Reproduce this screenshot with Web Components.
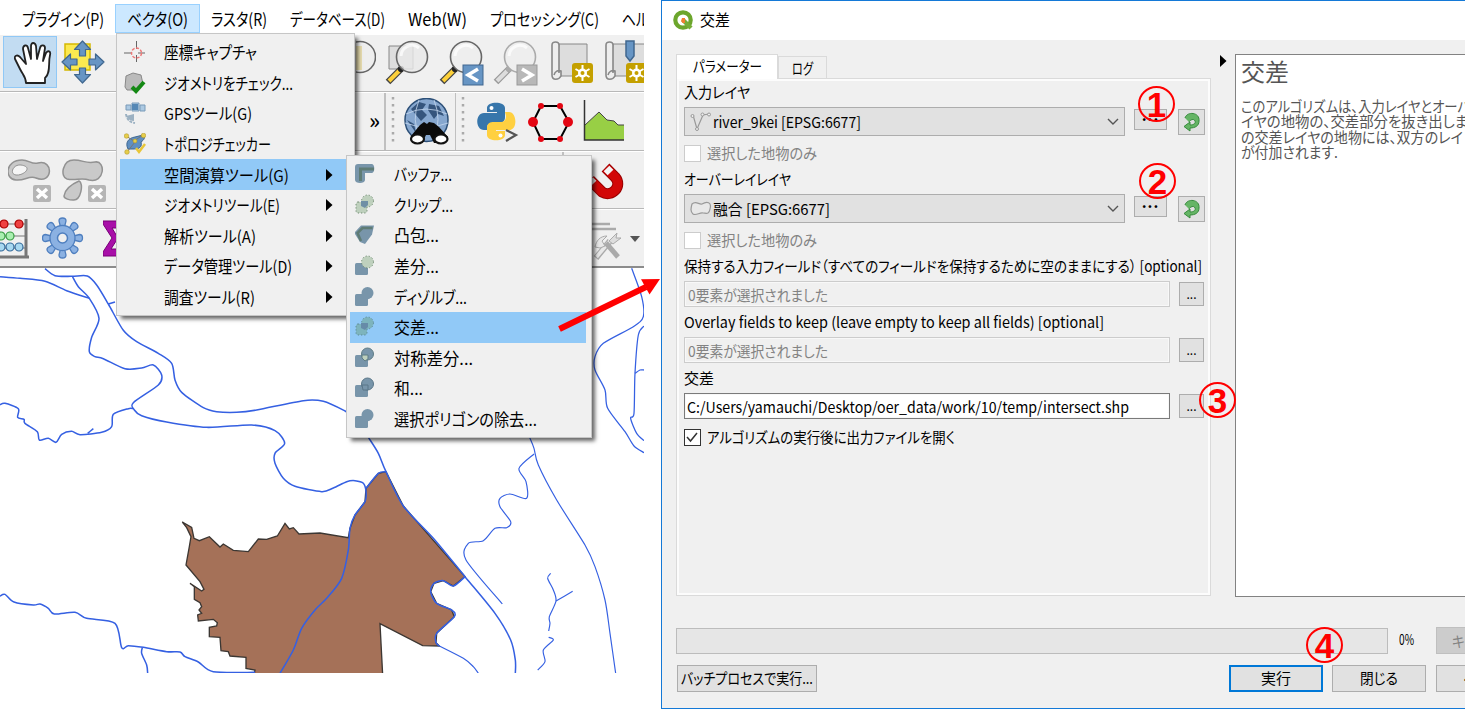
<!DOCTYPE html>
<html lang="ja">
<head>
<meta charset="utf-8">
<title>QGIS</title>
<style>
body{margin:0;width:1465px;height:709px;overflow:hidden;background:#fff;color:#000;font-family:"Noto Sans CJK JP",sans-serif;font-size:16px}
</style>
</head>
<body>
<tutorial-page></tutorial-page>
<script>
const make=(name,html,setup)=>{
  const t=document.createElement('template');t.innerHTML=html;
  customElements.define(name,class extends HTMLElement{
    connectedCallback(){
      if(this.shadowRoot)return;
      this.attachShadow({mode:'open'}).append(t.content.cloneNode(true));
      if(setup)setup(this,this.shadowRoot);
    }
  });
};

/* ---------- icons ---------- */
const lens=(c,glass)=>`<path d="M3 42L17 28" stroke="${c?'#444':'#999'}" stroke-width="6.500"/><path d="M4 41L14 31" stroke="${c?'#fcd03a':'#ddd'}" stroke-width="4"/><circle cx="16" cy="29" r="3" fill="${c?'#222':'#aaa'}"/><circle cx="27" cy="17" r="15.500" fill="${glass||'#eee'}" stroke="${c?'#666':'#aaa'}" stroke-width="1.600"/><path d="M16 16a11 11 0 0 1 18-8" fill="none" stroke="#fff" stroke-width="3" opacity=".7"/>`;
const star=(x,y)=>`<rect x="${x}" y="${y}" width="21" height="20" rx="3" fill="#c4a000"/><g transform="translate(${x+10.5} ${y+10})"><path d="M0-8V8M-7-4L7 4M-7 4L7-4" stroke="#fff" stroke-width="2"/><circle r="4.500" fill="#fff"/><circle r="2" fill="#c4a000"/></g>`;
const cross=(x,y)=>`<rect x="${x}" y="${y}" width="18" height="17" rx="2" fill="#b5b5b5"/><path d="M${x+4} ${y+4}l10 9m0-9l-10 9" stroke="#fff" stroke-width="3.500"/>`;
const cir='<circle cx="13.500" cy="7" r="6"';
const dotted='fill="#bed0bd" stroke="#718b73" stroke-dasharray="1.200 2"';
const sq='<rect x="1" y="8" width="13" height="12" rx="1.500" fill="#7895aa"/>';
const I={
hand:[38,44,`<path d="M12 41c0-6-3-8-6-14L1 17c-1-3 2-5 5-2l6 7L9 7c0-4 4-5 5-1l3 11V4c0-4 4-4 5 0l1 13 3-11c1-4 5-3 5 0l-2 13 3-8c2-3 5-2 4 2-2 8 1 18-5 23v5z" fill="#fff" stroke="#222" stroke-width="1.800" stroke-linejoin="round"/>`],
move:[44,44,`<rect x="4" y="4" width="25" height="26" fill="#fce94f" stroke="#d5b800" stroke-width="1.500"/><g fill="#6795c4" stroke="#40678f" stroke-width="1.200" stroke-linejoin="round"><path d="M21.500 1l8 8.500h-5V16h-6V9.500h-5z"/><path d="M21.500 43l8-8.500h-5V28h-6v6.500h-5z"/><path d="M1 22l8.500-8v5H16v6H9.500v5z"/><path d="M43 22l-8.500-8v5H28v6h6.500v5z"/></g>`],
zoomfull:[20,46,`<circle cx="4" cy="17" r="15.500" fill="#eee" stroke="#666" stroke-width="1.600"/><path d="M0 6h6v24H0z" fill="#e8ddaf"/>`],
zoomlayer:[45,46,`<path d="M4 6h24v23H4z" fill="#ddd" stroke="#888"/>`+lens(1,'#e9e9e9cc')],
zoomlast:[46,46,lens(1)+`<rect x="24" y="25" width="20" height="20" fill="#6795c4" stroke="#40678f"/><path d="M39 29l-10 6 10 6" fill="none" stroke="#fff" stroke-width="3.500"/>`],
zoomnext:[46,46,lens(0)+`<rect x="24" y="25" width="20" height="20" fill="#b8b8b8" stroke="#999"/><path d="M29 29l10 6-10 6" fill="none" stroke="#fff" stroke-width="3.500"/>`],
newmap:[46,46,`<path d="M9 4h28v32H6z" fill="#ddd" stroke="#888"/><path d="M9 33V5c0-4-7-4-7 0v30c0 6 7 5 9 1V31c-3-1-6 0-7 4" fill="#eee" stroke="#888" stroke-width="1.600"/>`+star(22,23)],
bookmark:[46,46,`<path d="M9 4h34v32H6z" fill="#ddd" stroke="#888"/><path d="M9 33V5c0-4-7-4-7 0v30c0 6 7 5 9 1V31c-3-1-6 0-7 4" fill="#eee" stroke="#888" stroke-width="1.600"/><path d="M22 1h8v15l-4 5-4-5z" fill="#6795c4" stroke="#40678f" stroke-width="1.500"/>`+star(22,23)],
globe:[48,48,`<circle cx="23.500" cy="22" r="21.500" fill="#86a7cf" stroke="#2d5078" stroke-width="1.500"/><path d="M8 11l8-7 7 2-4 6 5 5-6 6-5-6zM26 6l10 2 5 10-6-2-4 5-6-9zM4 22l7 4 2 9z" fill="#35557d"/><path d="M3 16q20-10 41 0M2 25q22 8 43 0M16 2q-8 20 1 38M31 2q8 20 0 38" fill="none" stroke="#c5d8ef" opacity=".8"/><path d="M17 27l4-3 3 2 2-2 5 1 5 4 9 10-3 6H31l-4-8h-4l-4 8H9l-1-7z" fill="#0b0b0b"/><ellipse cx="14.500" cy="41" rx="6.500" ry="4.500" fill="#fff" stroke="#111" stroke-width="2.200"/><ellipse cx="38" cy="41" rx="6.500" ry="4.500" fill="#fff" stroke="#111" stroke-width="2.200"/>`],
python:[42,42,`<path d="M10 10V6c0-7 18-7 18 0v9c0 5-3 6-7 6h-6c-4 0-5 2-5 7H7C-2 28-2 11 7 11h13v-1z" fill="#3776ab"/><path d="M28 10h4c8 0 9 18 0 18H19v1h9v4c0 7-18 7-18 0v-7c0-5 3-6 7-6h6c4 0 6-2 6-6z" fill="#ffd040"/><circle cx="14.500" cy="6" r="2" fill="#fff"/><circle cx="23.500" cy="33.500" r="2" fill="#fff"/><path d="M29 28l10 5-10 6" fill="none" stroke="#555" stroke-width="2.200"/>`],
hexagon:[46,42,`<path d="M13 4h19l9 16-9 17H13L5 20z" fill="none" stroke="#000" stroke-width="2"/><g fill="#e30613"><circle cx="13" cy="4" r="3"/><circle cx="32" cy="4" r="3"/><circle cx="13" cy="37" r="3"/><circle cx="32" cy="37" r="3"/><circle cx="5" cy="20" r="5"/><circle cx="40" cy="20" r="5"/></g>`],
profile:[42,43,`<path d="M2 25L16 12l8 8 7 1 4 4h6v15H2z" fill="#98cf45"/><path d="M2 25L16 12l8 8 7 1 4 4h6" fill="none" stroke="#444"/><path d="M1.500 0v40H41" fill="none" stroke="#333" stroke-width="1.500"/>`],
ring:[44,45,`<path d="M14 1C-3 1-4 20 8 21c9 1 13-5 20-2 17 7 18-19 2-15-6 2-9-3-16-3z" fill="#c9c9c9" stroke="#929292" stroke-width="1.500"/><path d="M13 6C5 5 1 15 8 16s18-8 5-10z" fill="#f5f5f5" stroke="#929292"/>`+cross(25,26)],
part:[46,45,`<path d="M12 1C0 1-2 18 5 20c9 2 14-2 22 1 16 4 17-20 6-18-9 2-12-2-21-2zM2 37c1-7 8-12 15-15 5 2 2 20-6 19-3 0-9-1-9-4z" fill="#c9c9c9" stroke="#929292" stroke-width="1.500"/>`+cross(26,26)],
magnet:[34,40,`<path d="M15.500 5.500L25 15C33 24 22 36 12 30L0 18" stroke="#900" stroke-width="11"/><path d="M16 6L25 15C33 24 22 36 12 30L0 18" stroke="#d20808" stroke-width="9"/><path d="M16.500 6.500l4 4M0 18l3.500 3.500" stroke="#f4f4f4" stroke-width="8"/>`],
abacus:[30,43,`<path d="M0 5h26M0 17h26M0 29h26" stroke="#777"/><path d="M26 0v38M0 38h29" stroke="#777" stroke-width="3"/><g stroke-width="1.200"><g fill="#ef4242" stroke="#a00"><circle cx="4" cy="5" r="4"/><circle cx="19" cy="5" r="4"/></g><g fill="#a9efb0" stroke="#3a9c45"><circle cx="1" cy="17" r="4"/><circle cx="10" cy="17" r="4"/></g><g fill="#a8d8f0" stroke="#376c9b"><circle cx="1" cy="28" r="4"/><circle cx="10" cy="28" r="4"/><circle cx="19" cy="28" r="4"/></g></g>`],
gear:[42,42,`<g transform="translate(20.500 21)"><g fill="#8bb1e2" stroke="#4f7fbf" stroke-width="1.300">${[0,45,90,135].map(a=>`<path transform="rotate(${a})" d="M-2-11L-3.500-17a3.500 3 0 0 1 7 0L2-11V11L3.500 17a3.500 3 0 0 1-7 0L-2 11z"/>`).join('')}</g><circle r="12.500" fill="#8bb1e2" stroke="#4f7fbf" stroke-width="1.300"/><circle r="11.500" fill="#8bb1e2"/><circle r="5" fill="#efefef" stroke="#4f7fbf" stroke-width="1.500"/></g>`],
sigma:[14,37,`<path d="M0 1h14v7L9 8l6 10-7 11h6v7H0v-4l9-14L0 4z" fill="#a80fa8" stroke="#760076"/>`],
tools:[32,42,`<path d="M0 3h18M0 8h24" stroke="#aaa" stroke-width="2.500"/><path d="M4 37L18 20" stroke="#aaa" stroke-width="6"/><path d="M4.500 36L18 20" stroke="#e8e8e8" stroke-width="3.500"/><path d="M14 22l12 14" stroke="#aaa" stroke-width="5"/><path d="M3 26c1-6 5-11 12-11l-5 5 3 5-5 2z" fill="#e8e8e8" stroke="#aaa"/><path d="M17 20l8-8-1 5 5 0-8 6z" fill="#ddd" stroke="#aaa"/>`],
capture:[22,22,`<path d="M0 12h8m6 0h7M12.500 0v8m0 6v7" stroke="#666"/><circle cx="12.500" cy="12" r="5" fill="none" stroke="#e77" stroke-width="1.500" stroke-dasharray="3 1.500"/>`],
check:[22,22,`<path d="M2 4l7-3 8 2 2 9-6 6H3L1 15z" fill="#bbb" stroke="#888"/><path d="M8 15l4 4 8-9" fill="none" stroke="#148914" stroke-width="4"/>`],
gps:[22,22,`<g stroke="#789ab8" fill="#acc9e2"><path d="M8 1h7v8H8zM2 3h5v5H2zM16 3h5v6h-5z"/></g><path d="M8 2h6v6H8z" fill="#5688b5"/><path d="M2 14q3 5 8 5l0-7z" fill="#9cb1c2"/><path d="M2 12q1 8 9 9" fill="none" stroke="#9cb1c2" stroke-width="2" stroke-dasharray="3 1"/>`],
topo:[22,22,`<path d="M4 16C1 10 4 5 11 4l8-2c3 2 1 5-2 7 2 7-5 7-8 7z" fill="#5f8fc2" stroke="#40678f"/><path d="M2 3l8 5 9-6M3 19l8-10" fill="none" stroke="#777"/><path d="M12 15l3 4 6-8" fill="none" stroke="#e8c638" stroke-width="2.500"/><g fill="#e6cd4b" stroke="#aa9020" stroke-width=".5"><circle cx="2.500" cy="3" r="2.300"/><circle cx="19.500" cy="2.500" r="2.300"/><circle cx="11" cy="8" r="2"/><circle cx="3" cy="19" r="2.300"/></g>`],
buffer:[22,22,`<path d="M4 1h14c3 0 3 9 0 9h-7v7c0 4-10 4-10 0V4c0-2 1-3 3-3z" fill="#7895aa"/><path d="M6.500 18V6H20" fill="none" stroke="#5f7c75" stroke-width="3"/>`],
clip:[22,22,`${cir} ${dotted}/><rect x="2" y="8" width="11" height="11" rx="2" ${dotted}/><path d="M7 7h7v4l-3 3-4-2z" fill="#6f8fa5"/>`],
hull:[22,22,`<path d="M1 8l6-6.500h13l-2 9-7 9.500-5-2-5-8z" fill="#7895aa"/><path d="M7 17L3.500 9l5-5h10" fill="none" stroke="#5f7c75" stroke-width="2.500"/>`],
diff:[22,22,sq+`${cir} ${dotted}/>`],
union1:[22,22,sq+`${cir} fill="#7895aa"/><path d="M8 8h8v4l-3 2-5-2z" fill="#7895aa"/>`],
inter:[22,22,`${cir} fill="#7db4bd" stroke="#5d8b98" stroke-dasharray="1.200 2"/><rect x="2" y="8" width="11" height="11" rx="2" fill="#7db4bd" stroke="#5d8b98" stroke-dasharray="1.200 2"/><path d="M7 7h7v4l-3 3-4-2z" fill="#668ba8"/>`],
sym:[22,22,sq+`${cir} fill="#7895aa" stroke="#5f7c85"/><path d="M8 8l6 0v4l-3 2-3-3z" fill="#bed0bd" stroke="#5f7c85"/>`],
union2:[22,22,sq+`${cir} fill="#7895aa" stroke="#5a7688"/><path d="M8 8h6v5H9z" fill="#7895aa" stroke="#5a7688"/>`],
qgis:[22,22,`<circle cx="10" cy="10" r="7.700" fill="#fff" stroke="#6ca62c" stroke-width="4.200"/><path d="M10 10l8 8" stroke="#76ad37" stroke-width="4.500"/><path d="M12 8v5H9.500L8 11l1-3z" fill="#f08030"/>`],
line:[22,20,`<path d="M3 3l4 14L13 3l6-1" fill="none" stroke="#999" stroke-width="1.200"/><g fill="#eee" stroke="#999"><circle cx="2.500" cy="4" r="1.500"/><circle cx="7" cy="17" r="1.500"/><circle cx="12.500" cy="2.500" r="1.500"/><circle cx="19" cy="2.500" r="1.500"/></g>`],
poly:[22,18,`<path d="M2 4c4-4 7 1 10 0 5-3 10-2 8 5-1 6-4 4-7 4-3-1-7 3-10 1-3-3-2-6-1-10z" fill="#e8e8e8" stroke="#999" stroke-width="1.200"/>`],
refresh:[18,20,`<path d="M2 6C4-1 17 0 16 9c0 5-4 7-9 7v3L1 14.500 7 10v3c4 0 6-2 5-4-1-3-5-1-6 1" fill="#65b565" stroke="#358a3b"/>`],
tri:[7,12,`<path d="M0 0l6.500 6L0 12z" fill="#000"/>`],
chev:[12,8,`<path d="M1 1l5 5 5-5" fill="none" stroke="#555" stroke-width="1.400"/>`],
caret:[10,6,`<path d="M0 0h10L5 6z" fill="#555"/>`],
grip:[4,50,`<path d="M2 1v49" stroke="#aaa" stroke-width="2.500" stroke-dasharray="2.500 4.500"/>`]
};
make('q-icon','<style>:host{display:block;flex:none;line-height:0}svg{display:block}</style>',(h,r)=>{
  const [w,ht,p]=I[h.getAttribute('name')];
  h.style.width=w+'px';
  r.innerHTML+=`<svg width="${w}" height="${ht}" viewBox="0 0 ${w} ${ht}" fill="none">${p}</svg>`;
});

/* ---------- menus ---------- */
make('menu-title','<style>:host{display:flex;align-items:center;height:28px;flex:none;font-size:17px}:host([open]){background:#cce8ff;border:1px solid #99d1ff;margin:0 -12px;padding:0 11px;height:27px}</style><fit-text><slot></slot></fit-text>',(h,r)=>r.querySelector('fit-text').setAttribute('w',h.getAttribute('w')));
make('menu-item',`<style>:host{display:grid;grid-template-columns:40px 1fr 19px;align-items:center;height:30.6px;font-size:16.5px;padding-left:4px}:host([on]){background:#91c9f7}</style>
<div id="i"></div><fit-text><slot></slot></fit-text><div id="t"></div>`,(h,r)=>{
  r.querySelector('fit-text').setAttribute('w',h.getAttribute('w'));
  if(h.hasAttribute('icon'))r.querySelector('#i').innerHTML=`<q-icon name="${h.getAttribute('icon')}"></q-icon>`;
  if(h.hasAttribute('sub'))r.querySelector('#t').innerHTML='<q-icon name="tri" style="margin-left:-4px"></q-icon>';
});
make('drop-menu','<style>:host{display:block;box-sizing:border-box;background:#f0f0f0;border:1px solid #c6c6c6;padding:3px 5px 3px 3px;box-shadow:4px 4px 4px -1px #0009}</style><slot></slot>');

/* ---------- toolbars ---------- */
make('tool-row','<style>:host{display:flex;box-sizing:border-box;height:58.3px;background:#f0f0f0;border-top:1px solid #fff;border-bottom:1.5px solid #b8b8b8;align-items:flex-start;overflow:hidden;position:relative}</style><slot></slot>');

/* ---------- map ---------- */
make('river-map','<style>:host{display:block;height:405px}svg{display:block}</style>',(h,r)=>{
  const curve=s=>{
    const p=s.trim().split(' ').map(a=>a.split(',').map(Number));
    let d='M'+p[0];
    for(let i=0;i<p.length-1;i++){
      const a=p[i-1]||p[i],b=p[i],c=p[i+1],e=p[i+2]||c,k=7;
      d+=`C${b[0]+(c[0]-a[0])/k},${b[1]+(c[1]-a[1])/k} ${c[0]-(e[0]-b[0])/k},${c[1]-(e[1]-b[1])/k} ${c}`;
    }
    return d;
  };
  const g=(x,y,w,l)=>`<g transform="translate(${x} ${y}) scale(.33333)" fill="none" stroke="#3560e2" stroke-width="${w}">${l.map(s=>`<path d="${curve(s)}"/>`).join('')}</g>`;
  const land='547,786 575,802 582,835 598,842 628,830 660,861 670,852 700,871 745,875 775,837 800,838 832,828 855,790 868,807 880,803 897,822 960,819 1045,833 1050,805 1065,765 1095,725 1098,685 1135,640 1158,635 1210,738 1395,950 1360,978 1330,962 1302,970 1292,995 1310,1030 1355,1050 1363,1070 1310,1120 1308,1148 1318,1158 1268,1157 1140,1091 1148,1245 762,1245 765,1230 738,1225 738,1192 690,1188 685,1175 663,1172 660,1132 628,1130 628,1102 650,1098 652,1088 640,1078 595,1083 593,1065 605,1060 597,1050 605,1040 600,1028 583,1018 583,980 570,970 605,993 612,988 600,965 558,915 568,860 573,830 560,803';
  r.innerHTML+=`<svg width="644" height="405" viewBox="0 268 644 405"><g transform="translate(0 260) scale(.33333)"><polygon points="${land}" fill="#a57158" stroke="#3c3733" stroke-width="4"/></g>`+
  g(0,260,4.6,['0,50 60,55 135,64 200,92 268,115','135,26 165,47 215,49 262,48 290,75 325,132 370,211 410,245 475,280 515,310 525,360 545,397 610,443 650,455 710,457 770,450 910,422 970,424 1035,453 1060,470','217,49 235,80 268,115 297,175 275,232 268,275 285,290 310,296 375,326 425,324 460,315 485,345 475,375 400,428 403,450 425,467 500,486 620,502 755,495 825,512 854,550 825,580 825,610 850,655 885,679 965,695 1000,684 1040,665 1065,662 1090,670 1098,695 1095,725 1065,765 1050,805 1045,870 1025,955 980,1015 945,1050 905,1105 880,1170 840,1240','0,434 15,430 55,446 53,472 72,478 75,490 112,515 118,540 145,535 168,547 185,523 215,514 240,524 305,517 335,500 340,463 385,446 400,446','263,520 280,506','0,1008 15,1003 42,1026 100,1035 120,1032 145,1045 163,1062 225,1057 260,1075 345,1090 365,1163 385,1157 430,1162 500,1175 540,1176 555,1190 595,1206 640,1235 765,1237','427,1163 425,1180 440,1215 443,1240','325,132 345,126'])+
  g(330,420,4.6,['100,30 117,55 145,100 168,155 220,258 310,355 405,470 495,580 542,660 556,720 556,760','405,470 370,498 340,482 312,490 302,515 320,550 365,570 373,590 320,640 318,668 328,678','108,205 145,160 168,155'])+
  g(330,420,3.5,['590,35 600,55 612,85 625,135 680,240 765,375 795,440 825,540 840,640 857,760','612,102 567,145 588,185 590,235 540,222 510,235 510,260 542,305 530,323 495,325 460,362 415,370 408,420 517,552','662,460 653,475 670,510 678,543 658,590 660,610 656,633','678,543 728,514','656,652 670,660 640,690 645,725 623,750','328,678 400,715 430,740 445,760'])+
  g(340,150,3.8,['875,355 905,440 910,500 880,530 790,580 765,620 765,660 795,720 803,775 855,845 882,888 912,908','912,528 895,555 885,670 882,790 872,805 890,850 912,872','885,670 900,660 912,660'])+'</svg>';
});

make('qgis-window',`<style>
:host{display:block;position:relative;width:644px;height:673px;overflow:hidden}
nav{display:flex;gap:23px;height:29px;padding:4px 0 1px 22px;background:#fff;width:700px}
.sel{box-sizing:border-box;width:54px;height:52px;margin:1px 0 0 3px;background:#c2dcf2;border:1px solid #90c8f6;padding:5px 0 0 10px;flex:none}
.sep{width:1.5px;height:58px;background:#c0c0c0;flex:none}
drop-menu{position:absolute}
.m1{left:116px;top:33px;width:239px;height:283px}
.m2{left:346px;top:155px;width:246px;height:283px}
tool-row:last-of-type{height:59.5px;border-bottom:2px solid #8c8c8c}
.more{font-size:22px;line-height:24px;font-weight:500;margin:14px 0 0 369px;width:15px}
</style>
<nav><menu-title w="82">プラグイン(P)</menu-title><menu-title w="61" open>ベクタ(O)</menu-title><menu-title w="56">ラスタ(R)</menu-title><menu-title w="95">データベース(D)</menu-title><menu-title w="59">Web(W)</menu-title><menu-title w="109">プロセッシング(C)</menu-title><menu-title w="59">ヘルプ(H)</menu-title></nav>
<tool-row><div class="sel"><q-icon name="hand"></q-icon></div><q-icon name="move" style="margin:5px 0 0 4px"></q-icon><q-icon name="zoomfull" style="margin:5px 0 0 251px"></q-icon><q-icon name="zoomlayer" style="margin:5px 0 0 9px"></q-icon><q-icon name="zoomlast" style="margin:5px 0 0 9px"></q-icon><q-icon name="zoomnext" style="margin:5px 0 0 8px"></q-icon><q-icon name="newmap" style="margin:5px 0 0 11px"></q-icon><q-icon name="bookmark" style="margin:5px 0 0 8px"></q-icon></tool-row>
<tool-row><span class="more">»</span><i class="sep"></i><q-icon name="grip" style="margin:3px 0 0 5px"></q-icon><q-icon name="globe" style="margin:5px 0 0 8px"></q-icon><i class="sep" style="margin-left:4px"></i><q-icon name="grip" style="margin:3px 0 0 5px"></q-icon><q-icon name="python" style="margin:9px 0 0 12px"></q-icon><q-icon name="hexagon" style="margin:9px 0 0 9px"></q-icon><q-icon name="profile" style="margin:7px 0 0 9px"></q-icon></tool-row>
<tool-row><q-icon name="ring" style="margin:7px 0 0 8px"></q-icon><q-icon name="part" style="margin:7px 0 0 10px"></q-icon><i class="sep" style="margin-left:454px"></i><q-icon name="magnet" style="margin:10px 0 0 26px"></q-icon></tool-row>
<tool-row><q-icon name="abacus" style="margin:9px 0 0 0"></q-icon><q-icon name="gear" style="margin:7px 0 0 12px"></q-icon><q-icon name="sigma" style="margin:10px 0 0 19px"></q-icon><q-icon name="tools" style="margin:11px 0 0 475px"></q-icon><q-icon name="caret" style="margin:26px 0 0 6px"></q-icon></tool-row>
<river-map></river-map>
<drop-menu class="m1">
<menu-item w="93" icon="capture">座標キャプチャ</menu-item><menu-item w="129" icon="check">ジオメトリをチェック...</menu-item><menu-item w="88" icon="gps">GPSツール(G)</menu-item><menu-item w="107" icon="topo">トポロジチェッカー</menu-item><menu-item w="125" sub on>空間演算ツール(G)</menu-item><menu-item w="116" sub>ジオメトリツール(E)</menu-item><menu-item w="92" sub>解析ツール(A)</menu-item><menu-item w="128" sub>データ管理ツール(D)</menu-item><menu-item w="91" sub>調査ツール(R)</menu-item>
</drop-menu>
<drop-menu class="m2">
<menu-item w="58" icon="buffer">バッファ...</menu-item><menu-item w="59" icon="clip">クリップ...</menu-item><menu-item w="45" icon="hull">凸包...</menu-item><menu-item w="45" icon="diff">差分...</menu-item><menu-item w="73" icon="union1">ディゾルブ...</menu-item><menu-item w="45" icon="inter" on>交差...</menu-item><menu-item w="79" icon="sym">対称差分...</menu-item><menu-item w="29" icon="union2">和...</menu-item><menu-item w="143" icon="union1">選択ポリゴンの除去...</menu-item>
</drop-menu>`);

/* ---------- dialog controls ---------- */
make('push-button','<style>:host{display:flex;box-sizing:border-box;align-items:center;justify-content:center;background:#e1e1e1;border:1.5px solid #adadad;flex:none;font-size:15px;line-height:16px}:host([primary]){border:2.5px solid #0078d7}:host([off]){background:#ccc;border-color:#bfbfbf;color:#838383}</style><slot></slot>');
make('combo-box','<style>:host{display:flex;box-sizing:border-box;width:441px;height:29px;border:1.5px solid #adadad;background:#e1e1e1;align-items:center;padding:0 5px;flex:none}.s{flex:1;padding-left:1px}</style><div class="i"></div><div class="s"><slot></slot></div><q-icon name="chev"></q-icon>',(h,r)=>{r.querySelector('.i').innerHTML=`<q-icon name="${h.getAttribute('icon')}"></q-icon>`;});
make('text-field','<style>:host{display:flex;box-sizing:border-box;width:486px;height:26px;border:1.5px solid #ccc;box-shadow:inset 0 0 0 1px #f8f8f8;align-items:center;padding-left:3px;color:#838383;flex:none}:host([active]){background:#fff;border-color:#7a7a7a;color:#000;padding-left:2px}</style><slot></slot>');
make('check-box','<style>:host{display:flex;align-items:center;gap:6px;color:#838383}i{box-sizing:border-box;width:17px;height:17px;background:#fff;border:1.5px solid #ccc;display:block}svg{display:none}:host([checked]){color:#000}:host([checked]) i{border-color:#333}:host([checked]) svg{display:block}</style><i><svg width="14" height="14"><path d="M2 7l3.500 4L12 3" fill="none" stroke="#333" stroke-width="1.500"/></svg></i><slot></slot>');
make('step-mark','<style>:host{position:absolute;box-sizing:border-box;width:37px;height:36px;border:2px solid #f00;border-radius:50%;font:bold 35px/33px "Liberation Sans",sans-serif;color:#f00;text-align:center}</style><slot></slot>');

make('algorithm-dialog',`<style>
:host{display:flex;flex-direction:column;box-sizing:border-box;width:804px;height:709px;border:solid #1479d7;border-width:1.5px 0 1.5px 1.5px;background:#f0f0f0;overflow:hidden;font-size:15px}
header{height:39px;flex:none;background:#fff;display:flex;align-items:center;padding-left:11px;gap:5px;font-size:15.500px}
header fit-text{margin-top:-3px}
.main{display:flex;height:543px;padding:14px 0 0 14px;flex:none}
.left{width:535px;flex:none}
.tabs{display:flex;align-items:flex-end;height:24px}
.tab{box-sizing:border-box;display:flex;justify-content:center;align-items:center;border:1px solid #dadada;border-bottom:0;width:49px;height:22px}
.tab.on{width:102px;height:25px;background:#fff;margin-bottom:-1px;padding-bottom:3px}
.panel{box-sizing:border-box;height:518px;border:1px solid #dadada;box-shadow:inset 0 0 0 2px #fcfcfc;padding:1px 0 0 7px;display:grid;align-content:start;grid-template-rows:24px 35px 28px 24px 35px 28px 24px 32px 24px 32px 24px 32px 30px}
.panel>*{display:flex;align-items:center}
.panel>div>fit-text,check-box fit-text{margin-top:-1px}
.arrow{width:24px;display:flex;justify-content:center;padding-top:1px;flex:none}
.help{box-sizing:border-box;width:300px;flex:none;background:#fff;border:1.500px solid #828282;padding:0 0 0 5px;height:543px;color:#555;line-height:15.400px;white-space:nowrap}
.help p{margin:0;height:15.400px}
.help .h{font-size:24px;height:43px;line-height:31px}
.prog{display:flex;margin:30px 0 0 14px;height:27px;align-items:center;flex:none}
.bar{box-sizing:border-box;width:712px;height:26px;background:#e6e6e6;border:1.500px solid #bcbcbc;flex:none}
.pct{width:37px;padding-left:11px;flex:none;line-height:20px;margin-top:-3px}
.btns{display:flex;margin:11px 0 0 15px;flex:none}
.btns push-button{height:27px;width:94px}
.btns fit-text{margin-top:-2px}
.d{width:33px;height:21px;margin:-4px 11px 0 9px}
.r{width:27px;height:26px;margin-top:1px}
.e{width:25px;height:24px;margin-left:9px;font-size:12px}
b{font-size:15px;letter-spacing:1px;line-height:10px;margin-top:-9px}
</style>
<header><q-icon name="qgis"></q-icon><fit-text w="30">交差</fit-text></header>
<div class="main"><div class="left"><div class="tabs"><div class="tab on"><fit-text w="69">パラメーター</fit-text></div><div class="tab"><fit-text w="21">ログ</fit-text></div></div>
<div class="panel">
<div><fit-text w="66">入力レイヤ</fit-text></div>
<div><combo-box icon="line"><fit-text w="148">river_9kei [EPSG:6677]</fit-text></combo-box><push-button class="d"><b>...</b></push-button><push-button class="r"><q-icon name="refresh"></q-icon></push-button></div>
<div><check-box><fit-text w="110">選択した地物のみ</fit-text></check-box></div>
<div><fit-text w="107">オーバーレイレイヤ</fit-text></div>
<div><combo-box icon="poly"><fit-text w="117">融合 [EPSG:6677]</fit-text></combo-box><push-button class="d"><b>...</b></push-button><push-button class="r"><q-icon name="refresh"></q-icon></push-button></div>
<div><check-box><fit-text w="110">選択した地物のみ</fit-text></check-box></div>
<div><fit-text w="518">保持する入力フィールド（すべてのフィールドを保持するために空のままにする） [optional]</fit-text></div>
<div><text-field><fit-text w="140">0要素が選択されました</fit-text></text-field><push-button class="e">...</push-button></div>
<div><fit-text w="420">Overlay fields to keep (leave empty to keep all fields) [optional]</fit-text></div>
<div><text-field><fit-text w="140">0要素が選択されました</fit-text></text-field><push-button class="e">...</push-button></div>
<div><fit-text w="30">交差</fit-text></div>
<div><text-field active><fit-text w="442">C:/Users/yamauchi/Desktop/oer_data/work/10/temp/intersect.shp</fit-text></text-field><push-button class="e">...</push-button></div>
<div><check-box checked><fit-text w="248">アルゴリズムの実行後に出力ファイルを開く</fit-text></check-box></div>
</div></div>
<div class="arrow"><q-icon name="tri"></q-icon></div>
<div class="help"><p class="h"><fit-text w="48">交差</fit-text></p><p><fit-text w="229">このアルゴリズムは、入力レイヤとオーバ</fit-text></p><p><fit-text w="227">イヤの地物の、交差部分を抜き出しま</fit-text></p><p><fit-text w="222">の交差レイヤの地物には、双方のレイ</fit-text></p><p><fit-text w="97">が付加されます.</fit-text></p></div></div>
<div class="prog"><div class="bar"></div><div class="pct"><fit-text w="15">0%</fit-text></div><push-button off style="width:94px;height:27px"><fit-text w="62">キャンセル</fit-text></push-button></div>
<div class="btns"><push-button style="width:140px"><fit-text w="132">バッチプロセスで実行...</fit-text></push-button><push-button primary style="margin-left:412px"><fit-text w="30">実行</fit-text></push-button><push-button style="margin-left:9px"><fit-text w="38">閉じる</fit-text></push-button><push-button style="margin-left:10px"><fit-text w="40">ヘルプ</fit-text></push-button></div>`);

make('tutorial-page',`<style>
:host{display:flex;gap:17px;position:relative;width:1465px;height:709px;overflow:hidden}
qgis-window,algorithm-dialog{flex:none}
svg{position:absolute;left:555px;top:272px}
</style><qgis-window></qgis-window><algorithm-dialog></algorithm-dialog>
<svg width="110" height="64" viewBox="555 272 110 64"><path d="M559.500 329L646 287" stroke="#f00" stroke-width="6"/><path d="M660 279L641 279.300L649.500 294.500z" fill="#f00"/></svg>
<step-mark style="left:1138px;top:86px">1</step-mark><step-mark style="left:1139px;top:163px">2</step-mark><step-mark style="left:1199px;top:382px">3</step-mark><step-mark style="left:1306px;top:627px">4</step-mark>`);

/* Squeezes its line of text to the width in the w attribute; defined last so its parents are laid out when it measures. */
make('fit-text','<style>:host{display:block;flex:none;white-space:nowrap;font-feature-settings:"palt"}span{display:inline-block;transform-origin:0 50%}</style><span><slot></slot></span>',(h,r)=>{
  const w=+h.getAttribute('w'),s=r.querySelector('span'),n=s.getBoundingClientRect().width;
  h.style.width=w+'px';
  if(n)s.style.transform=`scaleX(${w/n})`;
});
</script>
</body>
</html>
